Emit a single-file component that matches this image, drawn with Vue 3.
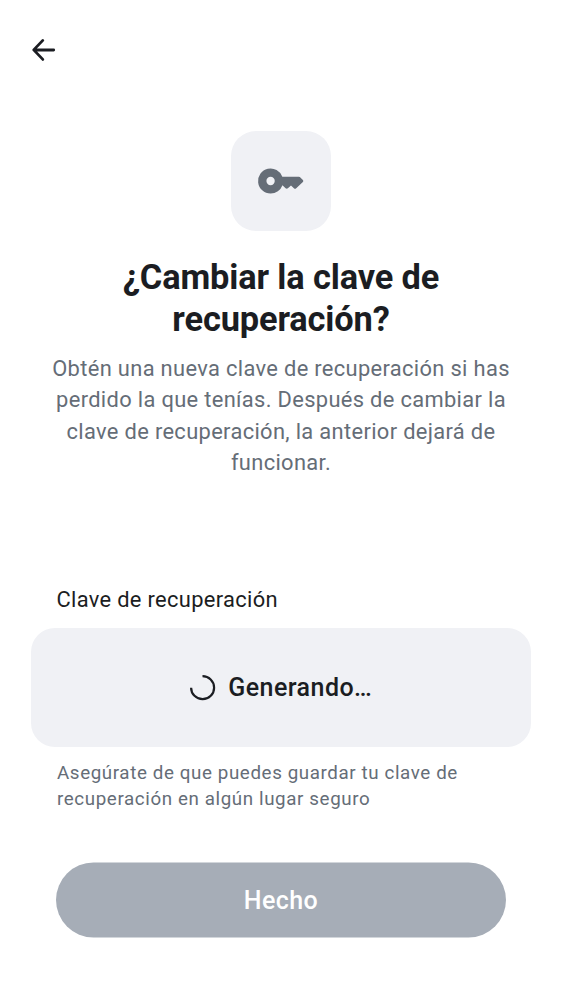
<script setup>
</script>

<template>
  <main class="screen">
    <header class="bar">
      <svg class="back" width="26" height="24" viewBox="0 0 26 24"><path d="M22.7 12H3M11.8 2.4L2.7 11.9l9.1 9.5" fill="none" stroke="#1b1d22" stroke-width="2.8" stroke-linejoin="round" stroke-linecap="round" /></svg>
    </header>
    <section class="hero">
      <div class="tile">
        <svg width="50" height="50" viewBox="0 0 24 24"><path fill="#656d77" fill-rule="evenodd" d="M7 18a6 6 0 1 1 5.65-8H20.6q.4 0 .7.3l1.2 1.25q.45.45 0 .9L19.3 15.5q-.55.5-1.1 0L16.8 14.2l-1.5 1.3q-.55.45-1.1 0L12.7 14A6 6 0 0 1 7 18Zm0-4a2 2 0 1 0 0-4 2 2 0 0 0 0 4Z" /></svg>
      </div>
      <h1>¿Cambiar la clave de<br>recuperación?</h1>
      <p>Obtén una nueva clave de recuperación si has<br>perdido la que tenías. Después de cambiar la<br>clave de recuperación, la anterior dejará de<br>funcionar.</p>
    </section>
    <section class="field">
      <div class="label">Clave de recuperación</div>
      <div class="box">
        <svg width="26" height="26" viewBox="0 0 26 26"><path d="M12.5 1.2A11.5 11.5 0 1 1 1.1 12.7" fill="none" stroke="#1b1d22" stroke-width="2.2" /></svg>
        <span>Generando…</span>
      </div>
      <div class="help">Asegúrate de que puedes guardar tu clave de<br>recuperación en algún lugar seguro</div>
    </section>
    <button class="done">Hecho</button>
  </main>
</template>

<style>
body { margin: 0; background: #fff; }
</style>
<style scoped>
.screen { width: 562px; height: 1000px; box-sizing: border-box; display: flex; flex-direction: column; font-family: Roboto, "Liberation Sans", sans-serif; color: #1b1d22; overflow: hidden; }
.bar { height: 131px; padding: 38px 0 0 31px; box-sizing: border-box; }
.back, svg { display: block; }
.hero { display: flex; flex-direction: column; align-items: center; text-align: center; }
.tile { width: 100px; height: 100px; border-radius: 25px; background: #f0f1f5; display: flex; align-items: center; justify-content: center; }
h1 { margin: 25px 0 0; font-size: 34.375px; line-height: 42px; font-weight: 700; letter-spacing: -.13px; white-space: nowrap; }
p { margin: 13px 0 0; font-size: 21.875px; line-height: 31.25px; letter-spacing: .34px; color: #656d77; white-space: nowrap; }
.field { margin: 106px 31px 0; }
.label { padding-left: 25.5px; font-size: 21.875px; line-height: 31px; letter-spacing: .33px; }
.box { margin-top: 13px; height: 119px; border-radius: 24px; background: #f0f1f5; display: flex; align-items: center; justify-content: center; gap: 12.5px; font-size: 25px; font-weight: 500; letter-spacing: .45px; }
.help { margin-top: 12.5px; padding-left: 26px; font-size: 18.75px; line-height: 26.5px; letter-spacing: .61px; color: #656d77; white-space: nowrap; }
.done { margin: 50px 56px 0; height: 75px; border: 0; border-radius: 38px; background: #a6adb7; color: #fff; font: 500 25px Roboto, "Liberation Sans", sans-serif; letter-spacing: .45px; transform: translateY(-.5px); }
</style>
